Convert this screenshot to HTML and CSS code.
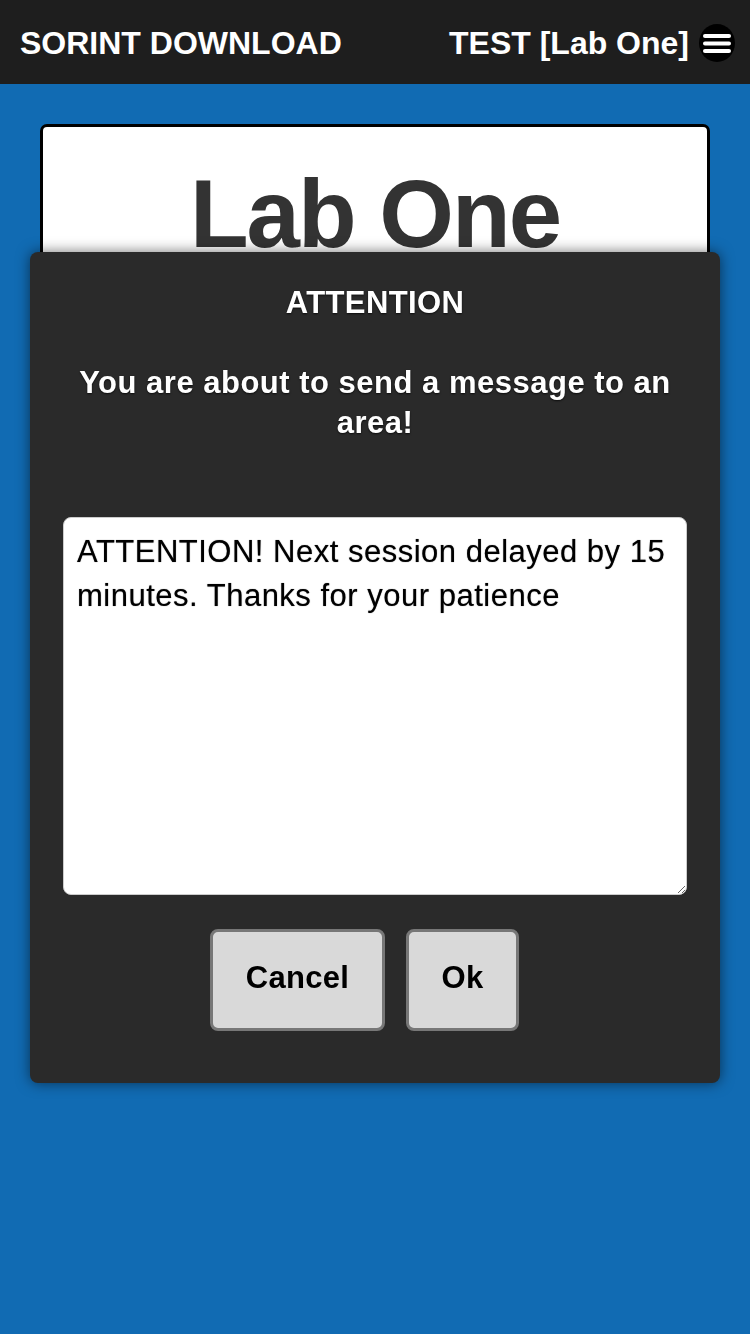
FILE: index.html
```html
<!DOCTYPE html>
<html>
<head>
<meta charset="utf-8">
<link rel="stylesheet" href="styles.css">
</head>
<body>
<header class="topbar">
  <div class="brand">SORINT DOWNLOAD</div>
  <div class="right">
    <span class="area">TEST [Lab One]</span>
    <button class="menu" aria-label="menu">
      <svg width="36" height="38" viewBox="0 0 36 38">
        <ellipse cx="18" cy="19" rx="18" ry="19" fill="#000"/>
        <rect x="4" y="10" width="28" height="4" rx="2" fill="#fff"/>
        <rect x="4" y="17.5" width="28" height="4" rx="2" fill="#fff"/>
        <rect x="4" y="25" width="28" height="4" rx="2" fill="#fff"/>
      </svg>
    </button>
  </div>
</header>
<main class="page">
  <section class="card">
    <h1 class="card-title">Lab One</h1>
  </section>
</main>
<div class="overlay">
  <div class="modal">
    <h2 class="modal-title">ATTENTION</h2>
    <p class="modal-text">You are about to send a message to an area!</p>
    <textarea class="message">ATTENTION! Next session delayed by 15 minutes. Thanks for your patience</textarea>
    <div class="actions">
      <button class="btn btn-cancel">Cancel</button>
      <button class="btn btn-ok">Ok</button>
    </div>
  </div>
</div>
</body>
</html>
```
FILE: styles.css
```css
* { box-sizing: border-box; }
html, body {
  margin: 0;
  padding: 0;
  height: 100%;
}
body {
  background: #116bb3;
  font-family: "Liberation Sans", Arial, sans-serif;
  overflow: hidden;
}
.topbar {
  height: 84px;
  background: #1e1e1e;
  display: flex;
  align-items: center;
  justify-content: space-between;
  padding: 2px 15px 0 20px;
  color: #fff;
}
.brand {
  font-weight: bold;
  font-size: 32px;
}
.right {
  display: flex;
  align-items: center;
  gap: 10px;
}
.area {
  font-weight: bold;
  font-size: 32px;
}
.menu {
  border: 0;
  padding: 0;
  background: none;
  width: 36px;
  height: 38px;
  display: block;
}
.menu svg { display: block; }
.page {
  padding: 40px;
}
.card {
  background: #fff;
  border: 3px solid #000;
  border-radius: 7px;
  height: 220px;
  display: flex;
  justify-content: center;
  padding-top: 39px;
}
.card-title {
  margin: 0;
  font-size: 96px;
  font-weight: bold;
  color: #333;
  letter-spacing: -2px;
  line-height: 1;
}
.overlay {
  position: fixed;
  inset: 0;
  display: flex;
  align-items: center;
  justify-content: center;
}
.modal {
  width: 690px;
  height: 831px;
  background: #2a2a2a;
  border-radius: 8px;
  box-shadow: 0 0 14px rgba(0,0,0,0.55);
  padding: 33px 33px 52px;
  display: flex;
  flex-direction: column;
  color: #fff;
  text-align: center;
  text-shadow: 0 1px 2px rgba(0,0,0,0.7);
}
.modal-title {
  margin: 0;
  font-size: 31px;
  line-height: 36px;
  font-weight: bold;
  letter-spacing: 0.4px;
}
.modal-text {
  margin: 42px 0 0;
  font-size: 31px;
  line-height: 40px;
  font-weight: bold;
  letter-spacing: 0.5px;
  padding: 0 8px;
}
.message {
  margin-top: 74px;
  width: 624px;
  height: 378px;
  border: 1px solid #ccc;
  border-radius: 8px;
  background: #fff;
  color: #000;
  padding: 12px 13px;
  font-family: "Liberation Sans", Arial, sans-serif;
  font-size: 31px;
  line-height: 44px;
  resize: vertical;
  letter-spacing: 0.5px;
  text-shadow: 0 0 1px rgba(0,0,0,0.6);
}
.actions {
  margin-top: 34px;
  display: flex;
  justify-content: center;
  gap: 21px;
  padding-right: 21px;
}
.btn {
  height: 102px;
  background: #d9d9d9;
  border: 3px solid #777;
  border-radius: 8px;
  font-family: "Liberation Sans", Arial, sans-serif;
  font-weight: bold;
  font-size: 31px;
  letter-spacing: 0.3px;
  color: #000;
  padding: 0 0 4px;
  text-shadow: none;
}
.btn-cancel { width: 175px; }
.btn-ok { width: 113px; }
```
